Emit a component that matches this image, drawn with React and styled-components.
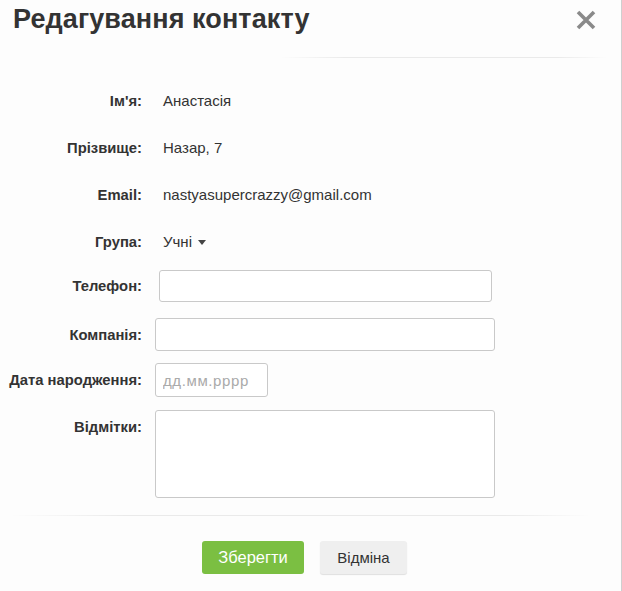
import React from "react";
import styled, { createGlobalStyle } from "styled-components";

const Global = createGlobalStyle`
  html, body { margin: 0; padding: 0; background: #fdfdfd; }
  body { font-family: "Liberation Sans", Arial, sans-serif; color: #333; }
  * { box-sizing: border-box; }
`;

const Modal = styled.div`
  width: 622px;
  height: 591px;
  background: #fdfdfd;
  border-right: 1px solid #cfcfcf;
  display: flex;
  flex-direction: column;
`;

const Header = styled.div`
  height: 57px;
  display: flex;
  align-items: flex-start;
  justify-content: space-between;
  padding: 4px 24px 0 13px;
`;

const Title = styled.h1`
  margin: 0;
  font-size: 27px;
  font-weight: 700;
  color: #333;
  letter-spacing: 0.1px;
`;

const Close = styled.button`
  border: 0;
  background: none;
  padding: 0;
  margin-top: 5px;
  width: 22px;
  height: 22px;
  cursor: pointer;
  display: flex;
`;

const Divider = styled.div`
  height: 1px;
  margin: ${(p) => p.$margin};
  background: linear-gradient(
    to right,
    rgba(232, 232, 232, 0),
    #eaeaea 20%,
    #eaeaea 85%,
    rgba(232, 232, 232, 0)
  );
`;

const Form = styled.div`
  display: flex;
  flex-direction: column;
  padding-top: 19px;
`;

const Row = styled.div`
  display: grid;
  grid-template-columns: 142px 1fr;
  column-gap: 13px;
  align-items: ${(p) => (p.$top ? "start" : "center")};
  height: ${(p) => p.$h}px;
  margin-top: ${(p) => p.$mt || 0}px;
`;

const Label = styled.label`
  text-align: right;
  font-size: 14.8px;
  font-weight: 700;
  color: #333;
  white-space: nowrap;
  padding-top: ${(p) => (p.$top ? "9px" : "0")};
`;

const Value = styled.div`
  padding-left: 8px;
  font-size: 15px;
  color: #333;
  display: flex;
  align-items: center;
  gap: 6px;
`;

const Caret = styled.span`
  width: 0;
  height: 0;
  border-left: 4px solid transparent;
  border-right: 4px solid transparent;
  border-top: 5px solid #444;
  margin-top: 1px;
`;

const Input = styled.input`
  width: ${(p) => p.$w}px;
  height: 100%;
  margin-left: ${(p) => p.$ml || 0}px;
  border: 1px solid #c9c9c9;
  border-radius: 3px;
  background: #fff;
  padding: 0 7px;
  font-family: inherit;
  font-size: 15px;
  letter-spacing: 0.6px;
  color: #333;
  outline: none;
  &::placeholder { color: #aaa; }
`;

const TextArea = styled.textarea`
  width: ${(p) => p.$w}px;
  height: 100%;
  border: 1px solid #c9c9c9;
  border-radius: 3px;
  background: #fff;
  resize: none;
  font-family: inherit;
  font-size: 15px;
  outline: none;
`;

const Footer = styled.div`
  display: flex;
  gap: 16px;
  padding-left: 202px;
  margin-top: 25px;
`;

const Button = styled.button`
  height: 33px;
  width: ${(p) => p.$w}px;
  border: 0;
  border-radius: 3px;
  font-family: inherit;
  font-size: ${(p) => (p.$primary ? "16.5px" : "15px")};
  cursor: pointer;
  background: ${(p) => (p.$primary ? "#7bbf42" : "#efefef")};
  color: ${(p) => (p.$primary ? "#fff" : "#333")};
  box-shadow: ${(p) => (p.$primary ? "none" : "0 1px 1px rgba(0,0,0,0.12)")};
`;

export default function App() {
  return (
    <>
      <Global />
      <Modal>
        <Header>
          <Title>Редагування контакту</Title>
          <Close aria-label="close">
            <svg width="22" height="22" viewBox="0 0 22 22">
              <path d="M3 3 L19 19 M19 3 L3 19" stroke="#8a8a8a" strokeWidth="3.6" strokeLinecap="butt" />
            </svg>
          </Close>
        </Header>
        <Divider $margin="0 14px 0 280px" />
        <Form>
          <Row $h={47}>
            <Label>Ім'я:</Label>
            <Value>Анастасія</Value>
          </Row>
          <Row $h={47}>
            <Label>Прізвище:</Label>
            <Value>Назар, 7</Value>
          </Row>
          <Row $h={47}>
            <Label>Email:</Label>
            <Value>nastyasupercrazzy@gmail.com</Value>
          </Row>
          <Row $h={47}>
            <Label>Група:</Label>
            <Value>
              Учні <Caret />
            </Value>
          </Row>
          <Row $h={32} $mt={5}>
            <Label>Телефон:</Label>
            <Input $w={333} $ml={4} />
          </Row>
          <Row $h={33} $mt={16}>
            <Label>Компанія:</Label>
            <Input $w={340} />
          </Row>
          <Row $h={34} $mt={12}>
            <Label>Дата народження:</Label>
            <Input $w={113} placeholder="дд.мм.рррр" />
          </Row>
          <Row $h={88} $mt={13} $top>
            <Label $top>Відмітки:</Label>
            <TextArea $w={340} />
          </Row>
        </Form>
        <Divider $margin="17px 30px 0 10px" />
        <Footer>
          <Button $primary $w={102}>Зберегти</Button>
          <Button $w={87}>Відміна</Button>
        </Footer>
      </Modal>
    </>
  );
}
